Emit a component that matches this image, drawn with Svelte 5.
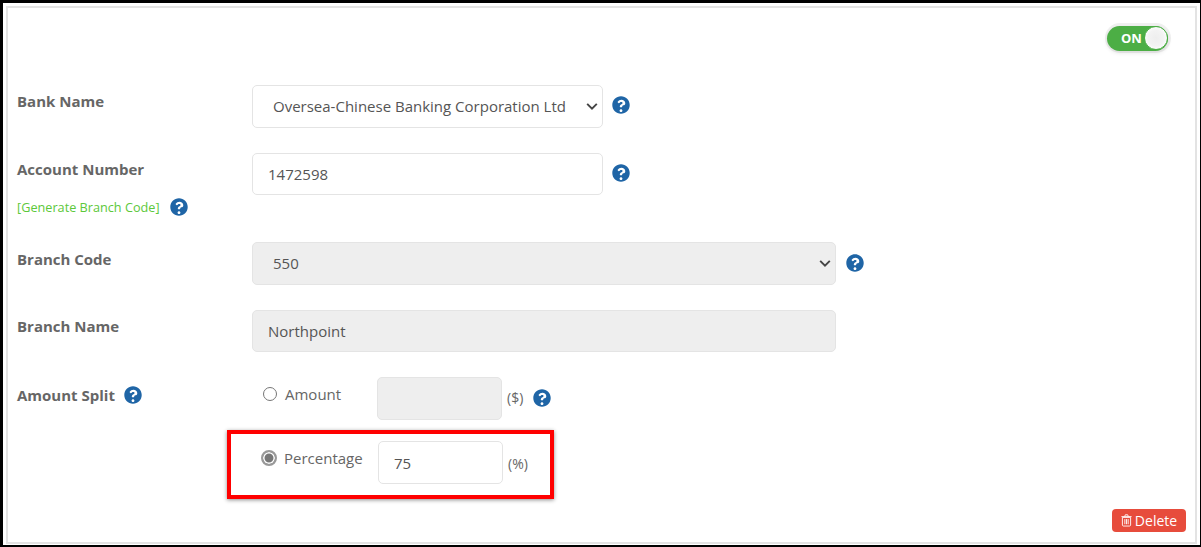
<script>
  const helpPath = "M256 8C119 8 8 119 8 256s111 248 248 248 248-111 248-248S393 8 256 8zm0 448c-22 0-40-18-40-40s18-40 40-40 40 18 40 40-18 40-40 40zm65-190c-21 12-31 20-31 34v6c0 7-5 12-12 12h-44c-7 0-12-5-12-12v-9c0-38 29-53 51-65 19-11 31-18 31-32 0-19-24-31-43-31-25 0-36 12-52 32-4 5-12 6-17 2l-27-20c-5-4-6-11-3-16 26-38 58-59 108-59 52 0 108 41 108 95 0 42-33 63-57 63z";
</script>

{#snippet help()}
  <svg class="help" viewBox="0 0 512 512" aria-hidden="true"><path d={helpPath} /></svg>
{/snippet}

{#snippet chevron()}
  <svg class="chevron" viewBox="0 0 16 16" aria-hidden="true"><path d="M2.5 5.500 8 11l5.500-5.500" /></svg>
{/snippet}

<div class="frame">
  <div class="card">
    <div class="top">
      <div class="toggle">
        <span class="on">ON</span>
        <span class="knob"></span>
      </div>
    </div>

    <div class="row bank">
      <div class="label">Bank Name</div>
      <div class="field select short pad-select">Oversea-Chinese Banking Corporation Ltd {@render chevron()}</div>
      {@render help()}
    </div>

    <div class="row account">
      <div class="label">
        Account Number
        <div class="generate"><span>[Generate Branch Code]</span> {@render help()}</div>
      </div>
      <div class="field short">1472598</div>
      {@render help()}
    </div>

    <div class="row branch">
      <div class="label">Branch Code</div>
      <div class="field select long pad-select off">550 {@render chevron()}</div>
      {@render help()}
    </div>

    <div class="row branchname">
      <div class="label">Branch Name</div>
      <div class="field long off">Northpoint</div>
    </div>

    <div class="row split">
      <div class="label">Amount Split {@render help()}</div>
      <div class="option amount">
        <span class="radio"></span>
        <span class="opt-text">Amount</span>
      </div>
      <div class="field tiny off"></div>
      <span class="unit">($)</span>
      {@render help()}
    </div>

    <div class="row percent">
      <div class="label"></div>
      <div class="option pct">
        <span class="radio checked"></span>
        <span class="opt-text">Percentage</span>
      </div>
      <div class="field tiny">75</div>
      <span class="unit">(%)</span>
    </div>

    <div class="foot">
      <button class="delete">
        <svg viewBox="0.3 1 13.400 14.500" aria-hidden="true"><path d="M2 4.500h10v9.200c0 .7-.5 1.300-1.200 1.300H3.200C2.500 15 2 14.400 2 13.700zM.8 3.500h12.400M4.800 3.300l.8-2h2.800l.8 2M5 6.500v6.300M7 6.500v6.300M9 6.500v6.300" /></svg>
        Delete
      </button>
    </div>

    <div class="highlight"></div>
  </div>
</div>

<style>
  :global(body) {
    margin: 0;
    background: #fff;
  }

  .frame {
    box-sizing: border-box;
    width: 1201px;
    height: 547px;
    border: solid #000;
    border-width: 3px 1px 2px 3px;
    padding: 3px 3px 1px 3px;
    font-family: "Open Sans", sans-serif;
    font-size: 15px;
    color: #555;
  }

  .card {
    position: relative;
    box-sizing: border-box;
    height: 100%;
    border: 2px solid #e3e3e3;
    padding: 0 9px;
  }

  .top {
    display: flex;
    justify-content: flex-end;
    padding: 15px 15px 0 0;
    height: 77px;
    box-sizing: border-box;
  }

  .toggle {
    display: flex;
    align-items: center;
    box-sizing: border-box;
    width: 66px;
    height: 30px;
    border-radius: 15px;
    background: #f0f0f0;
    padding: 3px 3px 3px 2px;
  }

  .on {
    display: flex;
    align-items: center;
    box-sizing: border-box;
    width: 62px;
    height: 25px;
    border-radius: 13px;
    background: #4cae45;
    color: #fff;
    font-size: 13px;
    font-weight: 700;
    padding-left: 14px;
    box-shadow: 0 2px 4px rgba(0, 0, 0, 0.1);
  }

  .knob {
    box-sizing: border-box;
    width: 24px;
    height: 24px;
    border-radius: 50%;
    margin-left: -24px;
    background: radial-gradient(circle at 50% 50%, #eee 0, #f3f3f3 50%, #fff 80%);
    border: 1px solid #4cae45;
    flex: none;
  }

  .row {
    display: flex;
    align-items: flex-start;
  }

  .label {
    flex: none;
    width: 235px;
    font-weight: 700;
    color: #666;
    line-height: 20px;
    padding-top: 6px;
  }

  .generate {
    display: flex;
    align-items: center;
    gap: 5px;
    margin-top: 18px;
    font-weight: 400;
    font-size: 12.700px;
    color: #5cc83a;
  }

  .field {
    box-sizing: border-box;
    flex: none;
    display: flex;
    align-items: center;
    height: 42px;
    padding: 0 15px;
    border: 1px solid #e4e4e4;
    border-radius: 5px;
    background: #fff;
    line-height: 20px;
    color: #555;
  }

  .select {
    justify-content: space-between;
    height: 43px;
  }

  .pad-select {
    padding: 0 3px 2px 20px;
  }

  .short {
    width: 351px;
  }

  .long {
    width: 584px;
  }

  .off {
    background: #eee;
  }

  .tiny {
    width: 125px;
    height: 43px;
  }

  .help {
    flex: none;
    width: 18px;
    height: 18px;
    fill: #1f65a6;
  }

  .row > .help {
    margin: 11px 0 0 9px;
  }

  .label .help {
    vertical-align: -3px;
    margin-left: 5px;
  }

  .chevron {
    flex: none;
    width: 14px;
    height: 14px;
    fill: none;
    stroke: #444;
    stroke-width: 2.200;
  }

  .bank {
    height: 68px;
  }

  .account {
    height: 89px;
  }

  .branch {
    height: 68px;
  }

  .branchname {
    height: 67px;
  }

  .split {
    height: 64px;
  }

  .percent {
    height: 68px;
  }

  .branch .label {
    padding-top: 7px;
  }

  .branch > .help {
    margin: 12px 0 0 10px;
  }

  .split .label {
    padding-top: 8px;
  }

  .option {
    flex: none;
    display: flex;
    align-items: center;
    height: 20px;
    margin-top: 7px;
    color: #666;
  }

  .amount {
    width: 125px;
    padding-left: 11px;
    box-sizing: border-box;
    gap: 8px;
  }

  .pct {
    width: 126px;
    padding-left: 9px;
    box-sizing: border-box;
    gap: 7px;
  }

  .radio {
    box-sizing: border-box;
    flex: none;
    width: 14px;
    height: 14px;
    border-radius: 50%;
    border: 1px solid #767676;
    background: #fff;
  }

  .radio.checked {
    width: 16px;
    height: 16px;
    border: 2px solid #999;
    box-shadow: inset 0 0 0 1.500px #fff;
    background: #777;
  }

  .unit {
    font-size: 14px;
    margin: 12px 0 0 5px;
    color: #666;
    line-height: 17px;
  }

  .percent .unit {
    margin-top: 14px;
  }

  .split > .help {
    margin: 12px 0 0 10px;
  }

  .foot {
    display: flex;
    justify-content: flex-end;
  }

  .delete {
    display: flex;
    align-items: center;
    justify-content: center;
    gap: 3px;
    box-sizing: border-box;
    width: 74px;
    height: 23px;
    border: 0;
    border-radius: 4px;
    padding: 0;
    background: #e74c3c;
    color: #fff;
    font-family: inherit;
    font-size: 14px;
  }

  .delete svg {
    width: 11px;
    height: 13px;
    fill: none;
    stroke: #fff;
    stroke-width: 1.100;
  }

  .highlight {
    position: absolute;
    left: 219px;
    top: 422px;
    width: 327px;
    height: 69px;
    box-sizing: border-box;
    border: 4px solid #f00;
    box-shadow: 0 1px 4px rgba(0, 0, 0, 0.45);
    pointer-events: none;
  }
</style>
